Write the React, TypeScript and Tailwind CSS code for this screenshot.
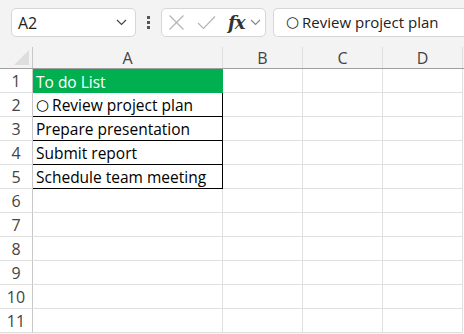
import React from "react";

const rows: string[] = [
  "To do List",
  "Review project plan",
  "Prepare presentation",
  "Submit report",
  "Schedule team meeting",
  "",
  "",
  "",
  "",
  "",
  "",
];

const cols = ["B", "C", "D"];

function Chevron({ className }: { className?: string }) {
  return (
    <svg className={className} width="11" height="7" viewBox="0 0 11 7" fill="none">
      <path d="M1 1l4.5 4.5L10 1" stroke="currentColor" strokeWidth="1.2" />
    </svg>
  );
}

function Circle() {
  return <span className="mr-[3px] font-['DejaVu_Sans',sans-serif] text-[15px]">○</span>;
}

function Toolbar() {
  return (
    <div className="flex h-[47px] items-start pt-[8px] pl-[11px]">
      <div className="flex h-[29px] w-[125px] items-center justify-between rounded-[5px] border border-[#d6d6d6] bg-white pl-[6px] pr-[8px]">
        <span className="text-[16px] text-[#222]">A2</span>
        <Chevron className="text-[#444]" />
      </div>
      <div className="ml-[11px] mr-[11px] flex h-[29px] flex-col items-center justify-center gap-[2px]">
        <span className="h-[3px] w-[3px] bg-[#555]" />
        <span className="h-[3px] w-[3px] bg-[#555]" />
        <span className="h-[3px] w-[3px] bg-[#555]" />
      </div>
      <div className="flex h-[29px] w-[105px] items-center rounded-[5px] border border-[#d6d6d6] bg-white pl-[6px]">
        <svg width="17" height="17" viewBox="0 0 17 17" fill="none">
          <path d="M1.5 1.5l14 14M15.5 1.5l-14 14" stroke="#b4b4b4" strokeWidth="1.2" />
        </svg>
        <svg className="ml-[12px]" width="19" height="15" viewBox="0 0 19 15" fill="none">
          <path d="M1 8l5.5 5.5L18 1.5" stroke="#b4b4b4" strokeWidth="1.2" />
        </svg>
        <span className="ml-[12px] font-['DejaVu_Serif',serif] text-[18px] font-bold italic leading-none tracking-[-1px] text-[#333]">
          fx
        </span>
        <Chevron className="ml-[6px] text-[#888]" />
      </div>
      <div className="ml-[7px] flex h-[29px] flex-1 items-center rounded-l-[5px] border border-r-0 border-[#d6d6d6] bg-white pl-[12px] text-[15px] text-[#222]">
        <Circle />
        <span>Review project plan</span>
      </div>
    </div>
  );
}

function HeaderRow() {
  return (
    <div className="flex h-[22px] border-b border-[#a0a0a0]">
      <div className="relative w-[33px] border-r border-[#c8c8c8]">
        <div className="absolute bottom-[3px] right-[3px] h-0 w-0 border-b-[15px] border-l-[15px] border-b-[#dedede] border-l-transparent" />
      </div>
      <div className="flex w-[190px] items-center justify-center border-r border-[#e0e0e0] text-[16px] text-[#444]">
        A
      </div>
      {cols.map((c) => (
        <div
          key={c}
          className="flex w-[80px] items-center justify-center border-r border-[#e0e0e0] text-[16px] text-[#444]"
        >
          {c}
        </div>
      ))}
    </div>
  );
}

function Row({ n, text }: { n: number; text: string }) {
  const title = n === 1;
  const boxed = n >= 2 && n <= 5;
  return (
    <div className="flex h-[24px]">
      <div className="flex w-[33px] items-center justify-center border-r border-b border-r-[#c8c8c8] border-b-[#e0e0e0] text-[16px] text-[#444]">
        {n}
      </div>
      <div
        className={
          title
            ? "flex w-[190px] items-end bg-[#00b050] pb-[2px] pl-[3px] text-[15.5px] leading-[18px] text-white"
            : boxed
            ? "flex w-[190px] items-end border-b border-r border-black pb-[2px] pl-[3px] text-[15.5px] leading-[18px] text-black"
            : "flex w-[190px] border-b border-r border-[#e0e0e0] bg-white"
        }
      >
        {n === 2 && <Circle />}
        {text}
      </div>
      {cols.map((c) => (
        <div key={c} className="w-[80px] border-b border-r border-[#e0e0e0] bg-white" />
      ))}
    </div>
  );
}

export default function App() {
  return (
    <div className="h-[334px] w-[464px] overflow-hidden bg-[#f3f3f3] font-['Open_Sans',sans-serif]">
      <Toolbar />
      <HeaderRow />
      <div className="bg-white">
        {rows.map((t, i) => (
          <Row key={i} n={i + 1} text={t} />
        ))}
      </div>
    </div>
  );
}
